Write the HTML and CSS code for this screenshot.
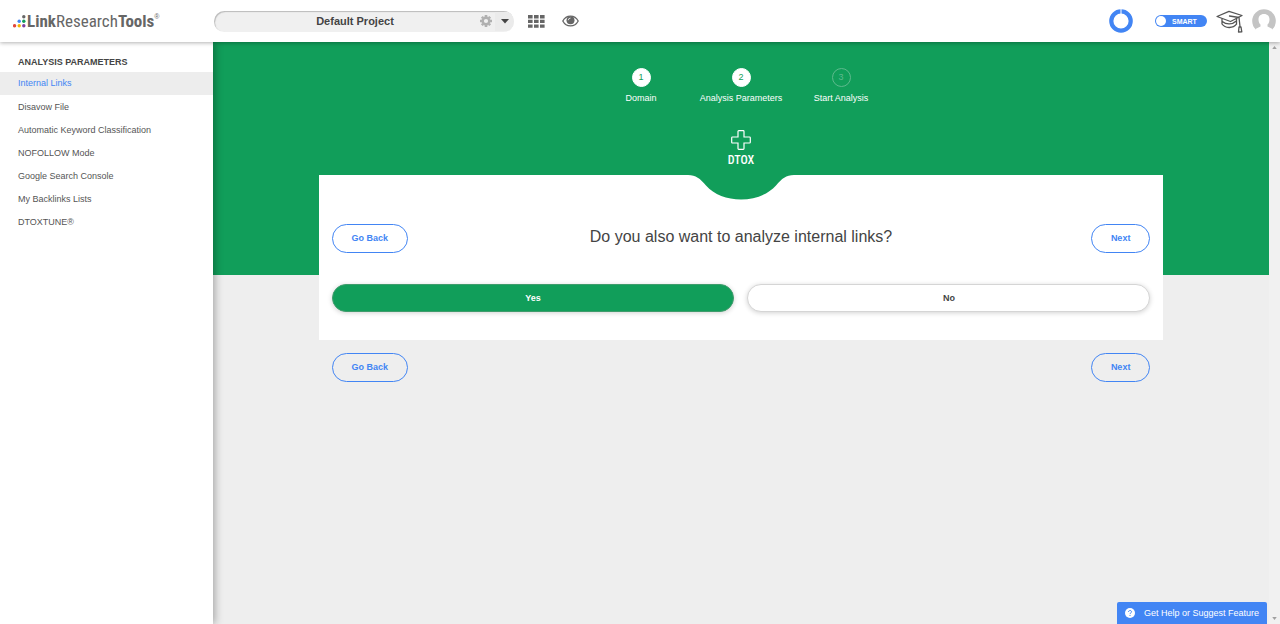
FILE: index.html
```html
<!DOCTYPE html>
<html lang="en">
<head>
<meta charset="utf-8">
<meta name="viewport" content="width=device-width, initial-scale=1">
<title>LinkResearchTools - DTOX</title>
<link rel="stylesheet" href="styles.css">
</head>
<body>
<header class="topbar">
  <a class="logo" href="#">
    <svg class="logo-dots" viewBox="0 0 13 13" aria-hidden="true">
      <circle cx="1.600" cy="10.800" r="1.700" fill="#e2483d"/><circle cx="6.200" cy="10.800" r="1.700" fill="#f5b400"/><circle cx="10.800" cy="10.800" r="1.700" fill="#7b3fa0"/>
      <circle cx="6.200" cy="6.200" r="1.700" fill="#4285f4"/><circle cx="10.800" cy="6.200" r="1.700" fill="#119e5a"/><circle cx="10.800" cy="1.700" r="1.700" fill="#666"/>
    </svg>
    <span class="logo-text"><b>Link</b>Research<b>Tools</b></span><span class="logo-mark">®</span>
  </a>
  <div class="project">
    <button class="project-name" type="button">Default Project</button>
    <button class="project-gear" type="button" aria-label="Project settings">
      <svg viewBox="0 0 12 12" width="12" height="12"><circle cx="6" cy="6" r="3.300" fill="none" stroke="#b0b0b0" stroke-width="2.400"/><path d="M6 0v2M6 10v2M0 6h2M10 6h2M1.800 1.800l1.400 1.400M8.800 8.800l1.400 1.400M1.800 10.200l1.400-1.400M8.800 3.200l1.400-1.400" stroke="#b0b0b0" stroke-width="2.600"/></svg>
    </button>
    <button class="project-caret" type="button" aria-label="Choose project">
      <svg viewBox="0 0 8 5" width="8" height="5"><path d="M0 0h8L4 4.500z" fill="#444"/></svg>
    </button>
  </div>
  <button class="icon-button" type="button" aria-label="Tools">
    <svg viewBox="0 0 17 13" width="17" height="13" fill="#666"><path d="M0 0h4.600v3.400H0zM6 0h4.600v3.400H6zM12 0h4.600v3.400H12zM0 4.700h4.600v3.400H0zM6 4.700h4.600v3.400H6zM12 4.700h4.600v3.400H12zM0 9.400h4.600v3.400H0zM6 9.400h4.600v3.400H6zM12 9.400h4.600v3.400H12z"/></svg>
  </button>
  <button class="icon-button" type="button" aria-label="Watch">
    <svg viewBox="0 0 17 12" width="17" height="12"><path d="M.8 6C4.200-.5 12.800-.5 16.200 6 12.800 12.500 4.200 12.500.8 6z" fill="none" stroke="#666" stroke-width="1.300"/><circle cx="8.500" cy="5.300" r="4" fill="#666"/><path d="M6.300 5.200a2.200 2.200 0 0 1 2.200-2.100" fill="none" stroke="#fff" stroke-width=".8"/></svg>
  </button>
  <div class="account">
    <svg viewBox="0 0 24 24" width="24" height="24" role="img" aria-label="Usage"><circle cx="12" cy="12" r="9.700" fill="none" stroke="#4285f4" stroke-width="4.200"/><path d="M12 0v5" stroke="#fff" stroke-width="1"/></svg>
    <label class="smart"><input type="checkbox" checked><span class="knob"></span>SMART</label>
    <button class="icon-button" type="button" aria-label="Academy">
      <svg viewBox="0 0 27 24" width="27" height="24" fill="none" stroke="#555" stroke-width="1.300" stroke-linejoin="round" stroke-linecap="round"><path d="M1 7.500 13 2.300l13 4.200L14.500 12.500z"/><path d="M6 10v5c3 4.500 11 4.800 14.500.2V9.700M6.300 12.500c4 3.300 10 3.300 14-.5M13.500 7l9.500 1.500 1 9M23 18h2l.8 4.800-3.300.2z"/></svg>
    </button>
    <button class="icon-button" type="button" aria-label="Profile">
      <svg viewBox="0 0 24 24" width="24" height="24"><circle cx="12" cy="12" r="11.800" fill="#c4c4c4"/><path d="M12 5c3.600 0 5.500 2.400 5.500 5.400 0 2.300-.8 4-2 5.200v1.900l4.500 2.300V24H4v-4.200l4.500-2.300v-1.900c-1.200-1.200-2-2.900-2-5.200C6.500 7.400 8.400 5 12 5z" fill="#fff"/></svg>
    </button>
  </div>
</header>
<div class="body">
  <nav class="sidebar" aria-labelledby="side-title">
    <h2 id="side-title" class="side-title">ANALYSIS PARAMETERS</h2>
    <ul class="side-list">
      <li><a class="side-link active" href="#">Internal Links</a></li>
      <li><a class="side-link" href="#">Disavow File</a></li>
      <li><a class="side-link" href="#">Automatic Keyword Classification</a></li>
      <li><a class="side-link" href="#">NOFOLLOW Mode</a></li>
      <li><a class="side-link" href="#">Google Search Console</a></li>
      <li><a class="side-link" href="#">My Backlinks Lists</a></li>
      <li><a class="side-link" href="#">DTOXTUNE®</a></li>
    </ul>
  </nav>
  <main class="main">
    <div class="hero">
      <ol class="steps">
        <li class="step"><span class="step-num">1</span>Domain</li>
        <li class="step"><span class="step-num">2</span>Analysis Parameters</li>
        <li class="step"><span class="step-num pending">3</span>Start Analysis</li>
      </ol>
      <div class="tool">
        <svg viewBox="0 0 20 20" width="20" height="20" aria-hidden="true"><path d="M7 1.500q0-.8.800-.8h4.400q.8 0 .8.800V7h5.500q.8 0 .8.800v4.400q0 .8-.8.800H13v5.500q0 .8-.8.800H7.800q-.8 0-.8-.8V13H1.500q-.8 0-.8-.8V7.800q0-.8.800-.8H7z" fill="none" stroke="#fff" stroke-width="1.200"/></svg>
        <span class="tool-name">DTOX</span>
      </div>
    </div>
    <div class="content">
      <section class="card">
        <svg class="notch" viewBox="0 0 106 25" aria-hidden="true"><path d="M0 0h106C98 0 94 3.500 88 10.500 80 19.500 67 24.500 53 24.500S26 19.500 18 10.500C12 3.500 8 0 0 0z" fill="#119e5a"/></svg>
        <div class="question-row">
          <button class="nav-button" type="button">Go Back</button>
          <h1 class="question">Do you also want to analyze internal links?</h1>
          <button class="nav-button" type="button">Next</button>
        </div>
        <div class="choices">
          <button class="choice chosen" type="button">Yes</button>
          <button class="choice" type="button">No</button>
        </div>
      </section>
      <div class="bottom-row">
        <button class="nav-button" type="button">Go Back</button>
        <button class="nav-button" type="button">Next</button>
      </div>
    </div>
  </main>
  <div class="scroll-track" aria-hidden="true">
    <svg viewBox="0 0 6 4" width="5" height="3"><path d="M0 4h6L3 0z" fill="#a0a0a0"/></svg>
    <svg viewBox="0 0 6 4" width="5" height="3"><path d="M0 0h6L3 4z" fill="#a0a0a0"/></svg>
  </div>
</div>
<button class="help" type="button">
  <svg viewBox="0 0 10 10" width="10" height="10" aria-hidden="true"><circle cx="5" cy="5" r="5" fill="#fff"/><path d="M3.500 3.900c.1-2 3.100-1.900 3 0C6.500 4.900 5 4.900 5 6.100M5 7v1" fill="none" stroke="#4285f4" stroke-width="1"/></svg>
  Get Help or Suggest Feature
</button>
</body>
</html>
```
FILE: styles.css
```css
* { box-sizing: border-box; }
body {
  margin: 0;
  min-height: 100vh;
  display: flex;
  flex-direction: column;
  background: #eee;
  color: #444;
  font: 9px/13px "Liberation Sans", Arial, sans-serif;
}
button { font: inherit; color: inherit; border: 0; padding: 0; background: none; cursor: pointer; }
svg { display: block; flex: none; }
h1, h2, ul, ol { margin: 0; padding: 0; }
ul, ol { list-style: none; }
a { color: inherit; text-decoration: none; }

.topbar {
  position: relative;
  z-index: 2;
  display: flex;
  align-items: center;
  height: 42px;
  padding: 0 4px 0 13px;
  background: #fff;
  box-shadow: 0 1px 4px rgba(0, 0, 0, .3);
}
.logo { display: flex; align-items: center; width: 201px; color: #666; }
.logo-dots { width: 13px; height: 13px; margin-right: 1px; }
.logo-text { font: 17px/20px "Roboto Condensed", Roboto, sans-serif; }
.logo-mark { align-self: flex-start; padding-top: 2px; font-size: 7px; line-height: 8px; }
.project {
  display: flex;
  align-items: center;
  width: 300px;
  height: 21px;
  margin-right: 14px;
  border-radius: 11px;
  background: #f0f0f0;
  box-shadow: inset 1px 1px 1px #bbb;
  overflow: hidden;
}
.project-name { flex: 1; padding-left: 16px; font-size: 11px; font-weight: bold; }
.project-gear { padding: 0 3px 0 0; }
.project-caret { display: flex; align-items: center; justify-content: center; width: 19px; height: 19px; background: #ebebeb; }
.icon-button { margin-right: 17px; }
.account { display: flex; align-items: center; margin-left: auto; }
.account .icon-button { margin: 0 0 0 9px; }
.smart {
  position: relative;
  display: flex;
  align-items: center;
  width: 52px;
  height: 12px;
  margin-left: 22px;
  padding-left: 1px;
  gap: 6px;
  border-radius: 6px;
  background: #4285f4;
  color: #fff;
  font-size: 7px;
  font-weight: bold;
}
.smart input { position: absolute; inset: 0; margin: 0; opacity: 0; }
.knob { width: 10px; height: 10px; border-radius: 50%; background: #fff; }

.body { flex: 1; display: flex; }
.sidebar {
  position: relative;
  z-index: 1;
  width: 213px;
  padding-top: 14px;
  background: #fff;
  box-shadow: 2px 0 8px rgba(0, 0, 0, .3);
}
.side-title { padding: 0 18px; margin-bottom: 3px; font-size: 9px; line-height: 13px; }
.side-link { display: block; padding: 0 18px; line-height: 23px; color: #555; }
.side-link.active { margin-bottom: 1px; background: #ededed; color: #4285f4; }

.main { flex: 1; }
.hero {
  height: 233px;
  padding-top: 26px;
  background: #119e5a;
  color: #fff;
}
.steps { display: grid; grid-template-columns: repeat(3, 100px); justify-content: center; }
.step { display: flex; flex-direction: column; align-items: center; gap: 5px; white-space: nowrap; }
.step-num { width: 19px; height: 19px; border: 1px solid #fff; border-radius: 50%; background: #fff; color: #119e5a; line-height: 17px; text-align: center; }
.step-num.pending { background: none; border-color: #5dba8d; color: #5dba8d; }
.tool { display: flex; flex-direction: column; align-items: center; gap: 2px; margin-top: 25px; }
.tool-name { font: 500 12px/16px "Roboto Condensed", Roboto, sans-serif; }
.content { width: 80%; margin: -100px auto 0; }
.card { position: relative; padding: 49px 13px 28px; background: #fff; }
.notch { position: absolute; top: 0; left: 50%; width: 106px; height: 25px; margin-left: -53px; }
.question-row { display: grid; grid-template-columns: 1fr auto 1fr; align-items: center; justify-items: start; margin-bottom: 31px; }
.question-row .nav-button:last-child { justify-self: end; }
.bottom-row { display: flex; justify-content: space-between; padding: 13px; }
.question { padding-bottom: 4px; font-size: 16px; line-height: 20px; font-weight: normal; }
.nav-button { height: 29px; padding: 0 19px; border: 1px solid #4285f4; border-radius: 15px; color: #4285f4; font-weight: bold; }
.choices { display: grid; grid-template-columns: 1fr 1fr; gap: 13px; }
.choice { height: 28px; border: 1px solid #d5d5d5; border-radius: 14px; background: #fff; font-weight: bold; box-shadow: 0 1px 5px rgba(0, 0, 0, .18); }
.choice.chosen { border-color: #3f9c6c; background: #119e5a; color: #fff; }
.scroll-track { display: flex; flex-direction: column; justify-content: space-between; align-items: center; width: 11px; padding: 4px 0; background: #f1f1f1; }
.help {
  position: fixed;
  right: 13px;
  bottom: 0;
  display: flex;
  align-items: center;
  gap: 9px;
  height: 22px;
  padding: 0 8px;
  border-radius: 2px 2px 0 0;
  background: #4285f4;
  color: #fff;
}
```
